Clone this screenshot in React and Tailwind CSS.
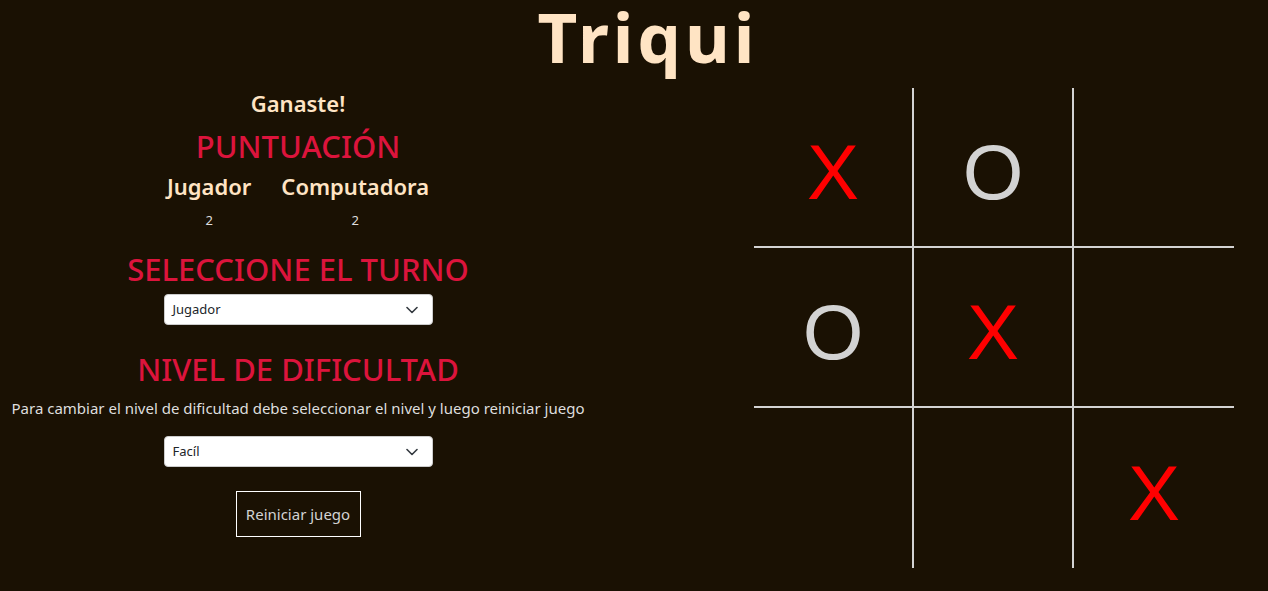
import React from "react";

const board = ["X", "O", "", "O", "X", "", "", "", "X"];

const Cell = ({ value, i }) => {
  const right = i % 3 !== 2 ? "border-r-2" : "";
  const bottom = i < 6 ? "border-b-2" : "";
  return (
    <div
      className={`${right} ${bottom} border-[#d3d3d3] w-[160px] h-[160px] flex items-center justify-center`}
    >
      <span
        className={`text-[78px] leading-none pt-[10px] font-['Liberation_Sans',sans-serif] ${
          value === "X" ? "text-[#ff0000]" : "text-[#d3d3d3]"
        }`}
      >
        {value}
      </span>
    </div>
  );
};

const Select = ({ value }) => (
  <div className="w-[269px] h-[31px] bg-white rounded-[4px] border border-[#ccc] flex items-center justify-between pl-[8px] pr-[14px]">
    <span className="text-[13px] text-[#212529]">{value}</span>
    <svg width="12" height="8" viewBox="0 0 12 8" fill="none">
      <path d="M1 1.5l5 5 5-5" stroke="#343a40" strokeWidth="1.6" strokeLinecap="round" strokeLinejoin="round" />
    </svg>
  </div>
);

export default function App() {
  return (
    <div className="min-h-[591px] bg-[#1a1103] font-['Noto_Sans',sans-serif] overflow-hidden">
      <h1 className="text-center text-[#ffe4c4] font-bold text-[69px] leading-[70px] tracking-[4px] pl-[28px] pt-[1px]">
        Triqui
      </h1>
      <div className="flex mt-[17px]">
        <div className="w-[596px] flex flex-col items-center">
          <p className="text-[#ffe4c4] font-semibold text-[22px] leading-[28px] mt-[1px]">Ganaste!</p>
          <h2 className="text-[#dc143c] font-medium text-[31px] leading-[40px] mt-[9px]">PUNTUACIÓN</h2>
          <div className="flex gap-[30px] mt-[5px]">
            <div className="flex flex-col items-center">
              <span className="text-[#ffe4c4] font-semibold text-[22px] leading-[30px]">Jugador</span>
              <span className="text-[#dedede] text-[13px] leading-[20px] mt-[9px]">2</span>
            </div>
            <div className="flex flex-col items-center">
              <span className="text-[#ffe4c4] font-semibold text-[22px] leading-[30px]">Computadora</span>
              <span className="text-[#dedede] text-[13px] leading-[20px] mt-[9px]">2</span>
            </div>
          </div>
          <h2 className="text-[#dc143c] font-medium text-[31px] leading-[40px] mt-[19px]">SELECCIONE EL TURNO</h2>
          <div className="mt-[5px]">
            <Select value="Jugador" />
          </div>
          <h2 className="text-[#dc143c] font-medium text-[31px] leading-[40px] mt-[24px]">NIVEL DE DIFICULTAD</h2>
          <p className="text-[#dedede] text-[15px] leading-[24px] mt-[7px] whitespace-nowrap">
            Para cambiar el nivel de dificultad debe seleccionar el nivel y luego reiniciar juego
          </p>
          <div className="mt-[16px]">
            <Select value="Facíl" />
          </div>
          <button className="mt-[24px] border border-white text-[#d3d3d3] text-[15px] w-[125px] h-[46px]">
            Reiniciar juego
          </button>
        </div>
        <div className="ml-[158px] grid grid-cols-3 w-[480px] h-[480px]">
          {board.map((v, i) => (
            <Cell key={i} value={v} i={i} />
          ))}
        </div>
      </div>
    </div>
  );
}
